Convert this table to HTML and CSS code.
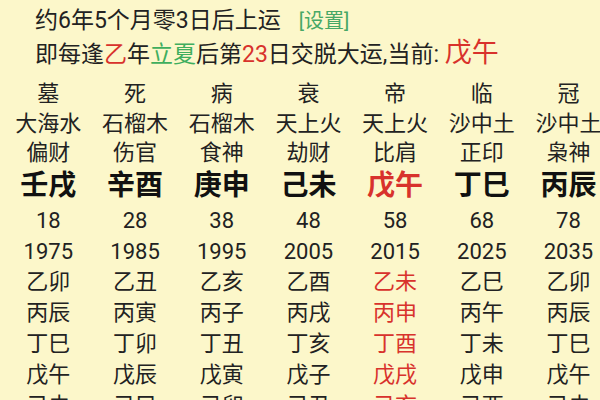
FILE: index.html
```html
<!DOCTYPE html>
<html lang="zh">
<head>
<meta charset="utf-8">
<link rel="stylesheet" href="styles.css">
</head>
<body>
<div class="page">
  <div class="info">
    <div class="line">约6年5个月零3日后上运<span class="set">[设置]</span></div>
    <div class="line">即每逢<span class="red">乙</span>年<span class="green">立夏</span>后第<span class="red">23</span>日交脱大运,当前: <span class="cur">戊午</span></div>
  </div>
  <div class="table">
    <div class="row r-stage"><span>墓</span><span>死</span><span>病</span><span>衰</span><span>帝</span><span>临</span><span>冠</span></div>
    <div class="row r-nayin"><span>大海水</span><span>石榴木</span><span>石榴木</span><span>天上火</span><span>天上火</span><span>沙中土</span><span>沙中土</span></div>
    <div class="row r-god"><span>偏财</span><span>伤官</span><span>食神</span><span>劫财</span><span>比肩</span><span>正印</span><span>枭神</span></div>
    <div class="row r-gz"><span>壬戌</span><span>辛酉</span><span>庚申</span><span>己未</span><span class="red">戊午</span><span>丁巳</span><span>丙辰</span></div>
    <div class="row r-age"><span>18</span><span>28</span><span>38</span><span>48</span><span>58</span><span>68</span><span>78</span></div>
    <div class="row r-year"><span>1975</span><span>1985</span><span>1995</span><span>2005</span><span>2015</span><span>2025</span><span>2035</span></div>
    <div class="row r-y"><span>乙卯</span><span>乙丑</span><span>乙亥</span><span>乙酉</span><span class="red">乙未</span><span>乙巳</span><span>乙卯</span></div>
    <div class="row r-y"><span>丙辰</span><span>丙寅</span><span>丙子</span><span>丙戌</span><span class="red">丙申</span><span>丙午</span><span>丙辰</span></div>
    <div class="row r-y"><span>丁巳</span><span>丁卯</span><span>丁丑</span><span>丁亥</span><span class="red">丁酉</span><span>丁未</span><span>丁巳</span></div>
    <div class="row r-y"><span>戊午</span><span>戊辰</span><span>戊寅</span><span>戊子</span><span class="red">戊戌</span><span>戊申</span><span>戊午</span></div>
    <div class="row r-y"><span>己未</span><span>己巳</span><span>己卯</span><span>己丑</span><span class="red">己亥</span><span>己酉</span><span>己未</span></div>
  </div>
</div>
</body>
</html>
```

FILE: styles.css
```css
html, body {
  margin: 0;
  padding: 0;
  background: #fcf7ca;
  overflow: hidden;
}
.page {
  width: 600px;
  height: 400px;
  overflow: hidden;
  font-family: Roboto, "Noto Sans CJK SC", sans-serif;
  color: #222;
}
.info {
  padding: 5px 0 0 35px;
}
.line {
  font-size: 23px;
  line-height: 32px;
  white-space: nowrap;
}
.set {
  font-size: 20px;
  color: #47a866;
  margin-left: 18px;
}
.red { color: #d8322c; }
.green { color: #3fae5e; }
.cur {
  color: #d8322c;
  font-size: 27px;
}
.table {
  margin-top: 8px;
  margin-left: 5px;
}
.row {
  display: grid;
  grid-template-columns: repeat(7, 86.7px);
  font-size: 22px;
  text-align: center;
  white-space: nowrap;
}
.r-stage { line-height: 30px; }
.r-nayin { line-height: 29px; }
.r-god { line-height: 29px; }
.r-gz {
  line-height: 38px;
  font-size: 28px;
  font-weight: bold;
  color: #111;
}
.r-age { line-height: 32px; }
.r-year { line-height: 29px; }
.r-y { line-height: 31px; }
```
